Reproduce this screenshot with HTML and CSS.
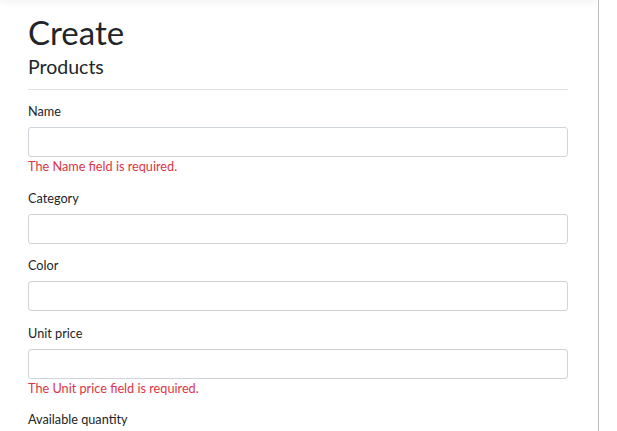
FILE: index.html
```html
<!DOCTYPE html>
<html lang="en">
<head>
<meta charset="utf-8">
<title>Create</title>
<link rel="stylesheet" href="styles.css">
</head>
<body>
<div class="frame">
  <div class="topshade"></div>
  <main class="content">
    <h1 class="title">Create</h1>
    <h4 class="subtitle">Products</h4>
    <hr class="rule">
    <form class="form">
      <div class="group">
        <label class="label">Name</label>
        <input class="control" type="text">
        <span class="error">The Name field is required.</span>
      </div>
      <div class="group">
        <label class="label">Category</label>
        <input class="control" type="text">
      </div>
      <div class="group">
        <label class="label">Color</label>
        <input class="control" type="text">
      </div>
      <div class="group">
        <label class="label">Unit price</label>
        <input class="control" type="text">
        <span class="error">The Unit price field is required.</span>
      </div>
      <div class="group">
        <label class="label">Available quantity</label>
        <input class="control" type="text">
      </div>
    </form>
  </main>
</div>
</body>
</html>
```
FILE: styles.css
```css
html, body {
  margin: 0;
  padding: 0;
  height: 100%;
  overflow: hidden;
  background: #fff;
}
body {
  font-family: Lato, "Noto Sans", sans-serif;
  color: #212529;
  font-size: 12.7px;
}
.frame {
  position: relative;
  width: 599px;
  height: 100%;
  border-right: 1px solid #bdbdbd;
  box-sizing: border-box;
  overflow: hidden;
}
.topshade {
  position: absolute;
  left: 0;
  right: 0;
  top: -10px;
  height: 10px;
  box-shadow: 0 2px 8px rgba(0, 0, 0, 0.06);
}
.content {
  padding: 0 30px 0 28px;
  width: 540px;
}
.title {
  font-size: 33px;
  font-weight: 400;
  line-height: 38px;
  margin: 13px 0 4px 0;
}
.subtitle {
  font-size: 19.5px;
  font-weight: 400;
  line-height: 23px;
  margin: 0;
}
.rule {
  border: 0;
  border-top: 1px solid #e3e3e3;
  margin: 11px 0 0 0;
}
.form {
  padding-top: 12px;
}
.group {
  display: flex;
  flex-direction: column;
  margin-bottom: 12.5px;
}
.label {
  line-height: 18px;
  margin-bottom: 7px;
}
.control {
  box-sizing: border-box;
  height: 30px;
  width: 100%;
  border: 1px solid #ced4da;
  border-radius: 3px;
  background: #fff;
  margin: 0;
  padding: 0 10px;
}
.error {
  color: #dc3545;
  line-height: 19px;
}
```
